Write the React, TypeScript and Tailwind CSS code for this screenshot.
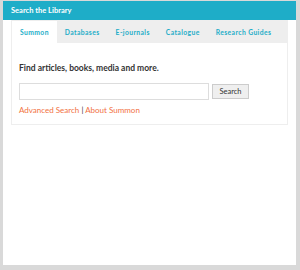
const tabs = ["Summon", "Databases", "E-journals", "Catalogue", "Research Guides"];

export default function App() {
  return (
    <div
      className="w-[300px] h-[270px] bg-[#d9d9d9] pl-[3px] pr-[4px] pb-[5px] pt-[1px]"
      style={{ fontFamily: "Lato, 'Open Sans', sans-serif" }}
    >
      <div className="h-full bg-white flex flex-col">
        <div className="h-[19px] bg-[#1eadc8] text-white font-bold text-[7.5px] pl-[8px] flex items-center">
          Search the Library
        </div>

        <div className="mx-[8px] border border-[#eeeeee]">
          <div className="h-[22px] bg-[#eeeeee] flex">
            {tabs.map((t, i) => (
              <div
                key={t}
                className={`px-[8px] flex items-center text-[6.75px] font-bold tracking-[0.4px] text-[#1eadc8] ${i === 0 ? "bg-white" : ""}`}
              >
                {t}
              </div>
            ))}
          </div>

          <div className="px-[7px] pt-[20px] pb-[9px]">
            <p className="text-[8.5px] leading-[10px] font-bold text-[#333333]">Find articles, books, media and more.</p>

            <div className="flex items-center gap-[3px] mt-[10px]">
              <input type="text" className="w-[190px] h-[17px] border border-[#dddddd] bg-white outline-none" />
              <button className="h-[15px] w-[37px] bg-[#efefef] border border-[#cccccc] text-[7.5px] text-[#333333]">
                Search
              </button>
            </div>

            <div className="mt-[5px] text-[8px] leading-[10px] text-[#f2713f]">
              <a>Advanced Search</a>
              <span className="text-[#333333]"> | </span>
              <a>About Summon</a>
            </div>
          </div>
        </div>
      </div>
    </div>
  );
}
